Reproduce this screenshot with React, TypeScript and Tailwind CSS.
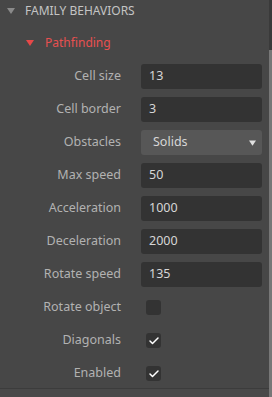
import { Check } from 'lucide-react';

type Row =
  | { label: string; kind: 'input'; value: string }
  | { label: string; kind: 'select'; value: string }
  | { label: string; kind: 'check'; checked: boolean };

const rows: Row[] = [
  { label: 'Cell size', kind: 'input', value: '13' },
  { label: 'Cell border', kind: 'input', value: '3' },
  { label: 'Obstacles', kind: 'select', value: 'Solids' },
  { label: 'Max speed', kind: 'input', value: '50' },
  { label: 'Acceleration', kind: 'input', value: '1000' },
  { label: 'Deceleration', kind: 'input', value: '2000' },
  { label: 'Rotate speed', kind: 'input', value: '135' },
  { label: 'Rotate object', kind: 'check', checked: false },
  { label: 'Diagonals', kind: 'check', checked: true },
  { label: 'Enabled', kind: 'check', checked: true },
];

export default function App() {
  return (
    <div
      className="flex w-[272px] h-[397px] overflow-hidden bg-[#474747] text-[12.5px]"
      style={{ fontFamily: '"Noto Sans", "Open Sans", sans-serif' }}
    >
      <div className="flex flex-col flex-1">
        {/* Section header */}
        <div className="flex items-center h-[22px] pl-[7px] gap-[10px] text-[12px] text-[#c4c4c4]">
          <Triangle className="w-[8px] h-[6px] text-[#8a8a8a]" />
          <span>FAMILY BEHAVIORS</span>
        </div>

        {/* Behavior */}
        <div className="flex items-center h-[22px] mt-[10px] pl-[26px] gap-[11px] text-[12px] text-[#e75050]">
          <Triangle className="w-[8px] h-[6px] text-[#e64848]" />
          <span>Pathfinding</span>
        </div>

        <div className="flex flex-col gap-2 mt-[10px]">
          {rows.map((row) => (
            <PropRow key={row.label} row={row} />
          ))}
        </div>

        <div className="mt-[2px] border-t border-[#3c3c3c] flex-1 bg-[#494949]" />
      </div>

      {/* Scrollbar */}
      <div className="flex flex-col w-[3px] bg-[#3a3a3a]">
        <div className="mt-[50px] flex-1 bg-[#777777]" />
      </div>
    </div>
  );
}

function PropRow({ row }: { row: Row }) {
  return (
    <div className="flex items-center h-[25px]">
      <div className="w-[121px] text-right text-[#b2b2b2]">{row.label}</div>
      <div className="ml-[20px] w-[121px] h-full flex items-center">
        {row.kind === 'input' && (
          <div className="w-full h-full flex items-center px-2 rounded-[3px] bg-[#333333] text-[#d6d6d6]">
            {row.value}
          </div>
        )}
        {row.kind === 'select' && (
          <div className="w-full h-full flex items-center justify-between pl-3 pr-[6px] rounded-[3px] bg-[#575757] text-[#d6d6d6]">
            <span>{row.value}</span>
            <Triangle className="w-[7px] h-[6px] text-[#e0e0e0]" />
          </div>
        )}
        {row.kind === 'check' && (
          <div className="ml-[5px] w-[15px] h-[15px] rounded-[3px] bg-[#333333] flex items-center justify-center">
            {row.checked && <Check className="w-[12px] h-[12px] text-white" strokeWidth={3} />}
          </div>
        )}
      </div>
    </div>
  );
}

function Triangle({ className }: { className: string }) {
  return (
    <svg viewBox="0 0 8 6" className={className} fill="currentColor">
      <path d="M0 0 L8 0 L4 6 Z" />
    </svg>
  );
}
